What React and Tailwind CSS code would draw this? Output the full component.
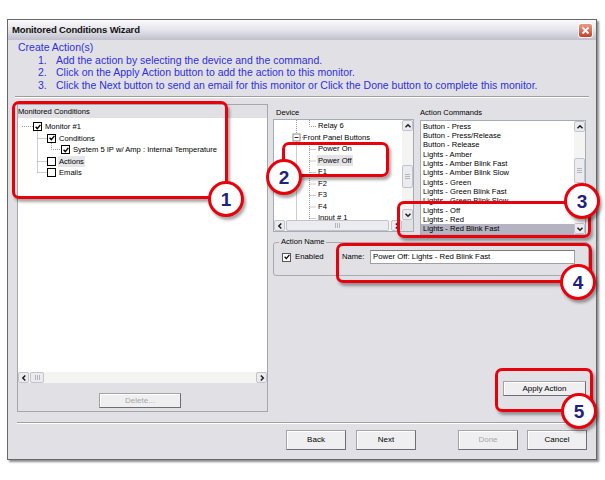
import React from "react";

function Chev({ d }) {
  const p = {
    up: "M1.5 5.3 L4 2.8 L6.5 5.3",
    down: "M1.5 2.8 L4 5.3 L6.5 2.8",
    left: "M5.3 1.5 L2.8 4 L5.3 6.5",
    right: "M2.8 1.5 L5.3 4 L2.8 6.5",
  }[d];
  return (
    <svg width="8" height="8" viewBox="0 0 8 8">
      <path d={p} fill="none" stroke="#1e1e1e" strokeWidth="1.5" />
    </svg>
  );
}

function SBtn({ d }) {
  return (
    <div className="w-[11px] h-[11px] shrink-0 flex items-center justify-center bg-[#ececf0] border border-[#c3c3cc] rounded-[2px]">
      <Chev d={d} />
    </div>
  );
}

function GripV() {
  return (
    <svg width="5" height="5" viewBox="0 0 5 5">
      <path d="M0 0.5H5M0 2.5H5M0 4.5H5" stroke="#b5b5c0" strokeWidth="1" />
    </svg>
  );
}

function GripH() {
  return (
    <svg width="5" height="5" viewBox="0 0 5 5">
      <path d="M0.5 0V5M2.5 0V5M4.5 0V5" stroke="#b5b5c0" strokeWidth="1" />
    </svg>
  );
}

function TreeCheck({ checked }) {
  return (
    <div className="w-[9px] h-[9px] shrink-0 border-[1.5px] border-black bg-white flex items-center justify-center">
      {checked && (
        <svg width="6" height="6" viewBox="0 0 6 6">
          <path d="M0.6 2.8 L2.3 4.6 L5.4 0.9" fill="none" stroke="#000" strokeWidth="1.4" />
        </svg>
      )}
    </div>
  );
}

function Btn({ children, className, disabled }) {
  return (
    <div
      className={
        "flex items-center justify-center bg-[#efeff1] border border-[#a4a4a8] border-r-[#6e6e72] border-b-[#6e6e72] shadow-[inset_1px_1px_0_#ffffff] text-[8px] " +
        (disabled ? "text-[#a6a6a8] " : "text-black ") +
        className
      }
    >
      {children}
    </div>
  );
}

function Callout({ className }) {
  return (
    <div
      className={
        "absolute border-[3px] border-[#e8000b] rounded-[7px] shadow-[2px_3px_3px_rgba(0,0,0,0.35)] " + className
      }
    />
  );
}

function Badge({ n, className }) {
  return (
    <div
      className={
        "absolute w-[36px] h-[36px] rounded-full bg-white border-[3px] border-[#e8000b] shadow-[2px_3px_3px_rgba(0,0,0,0.35)] flex items-center justify-center text-[19px] leading-none font-bold text-[#22227a] " +
        className
      }
    >
      {n}
    </div>
  );
}

const devRows = [
  { t: "Relay 6", pl: "pl-[44px]" },
  { t: "Front Panel Buttons", pl: "pl-[29px]" },
  { t: "Power On", pl: "pl-[44px]" },
  { t: "Power Off", pl: "pl-[44px]", sel: true },
  { t: "F1", pl: "pl-[44px]" },
  { t: "F2", pl: "pl-[44px]" },
  { t: "F3", pl: "pl-[44px]" },
  { t: "F4", pl: "pl-[44px]" },
  { t: "Input # 1", pl: "pl-[44px]" },
];

const cmds = [
  "Button - Press",
  "Button - Press/Release",
  "Button - Release",
  "Lights - Amber",
  "Lights - Amber Blink Fast",
  "Lights - Amber Blink Slow",
  "Lights - Green",
  "Lights - Green Blink Fast",
  "Lights - Green Blink Slow",
  "Lights - Off",
  "Lights - Red",
  "Lights - Red Blink Fast",
];

export default function App() {
  return (
    <div className="relative w-[605px] h-[480px] bg-white pt-[19px] pl-[7px] overflow-hidden font-['Liberation_Sans',Arial,sans-serif] text-black">
      <div className="w-[590px] h-[441px] border border-[#66666b] bg-[#e1e0e5] flex flex-col shadow-[2px_2px_2px_rgba(0,0,0,0.45)]">
        {/* Title bar */}
        <div className="h-[20px] shrink-0 flex items-center justify-between bg-linear-to-b from-[#fbfbfd] via-[#e4e4ea] to-[#bfc0cc] pl-[4px] pr-[3px]">
          <span className="text-[9.5px] font-bold tracking-[-0.15px] text-[#111]">Monitored Conditions Wizard</span>
          <div className="w-[15px] h-[15px] rounded-[3px] border border-white bg-linear-to-b from-[#eb9a84] to-[#c63e28] flex items-center justify-center">
            <svg width="9" height="9" viewBox="0 0 9 9">
              <path d="M1.5 1.5 L7.5 7.5 M7.5 1.5 L1.5 7.5" stroke="#fff" strokeWidth="1.8" />
            </svg>
          </div>
        </div>

        {/* Instructions */}
        <div className="h-[56px] shrink-0 pl-[10px] pt-[1px] text-[10.5px] leading-[12.5px] text-[#2f2fe0]">
          <div>Create Action(s)</div>
          <div className="flex">
            <span className="ml-[20px] w-[18px]">1.</span>
            <span>Add the action by selecting the device and the command.</span>
          </div>
          <div className="flex">
            <span className="ml-[20px] w-[18px]">2.</span>
            <span>Click on the Apply Action button to add the action to this monitor.</span>
          </div>
          <div className="flex">
            <span className="ml-[20px] w-[18px]">3.</span>
            <span className="whitespace-nowrap">Click the Next button to send an email for this monitor or Click the Done button to complete this monitor.</span>
          </div>
        </div>

        <div className="h-[2px] shrink-0 mx-[7px] border-t border-t-[#9d9da2] border-b border-b-white" />

        {/* Panels */}
        <div className="h-[308px] shrink-0 mt-[6px] flex pl-[9px]">
          {/* Left panel */}
          <div className="w-[251px] h-[308px] border border-[#a7a6ab] flex flex-col">
            <div className="h-[13px] shrink-0 text-[7.6px] leading-[13px]">Monitored Conditions</div>
            <div className="h-[254px] shrink-0 bg-white relative text-[7.6px]">
              <svg className="absolute left-0 top-0" width="60" height="60" viewBox="0 0 60 60">
                <g stroke="#9c9c9c" strokeWidth="1" strokeDasharray="1 1" fill="none">
                  <path d="M4 8.5 H15" />
                  <path d="M19.5 13.5 V54.5" />
                  <path d="M19.5 20.5 H29 M19.5 43.5 H29 M19.5 54.5 H29" />
                  <path d="M33.5 25 V31.5 H43" />
                </g>
              </svg>
              <div className="relative pt-[3px]">
                <div className="h-[11.5px] flex items-center pl-[15px]">
                  <TreeCheck checked />
                  <span className="ml-[3px]">Monitor #1</span>
                </div>
                <div className="h-[11.5px] flex items-center pl-[29px]">
                  <TreeCheck checked />
                  <span className="ml-[3px]">Conditions</span>
                </div>
                <div className="h-[11.5px] flex items-center pl-[43px]">
                  <TreeCheck checked />
                  <span className="ml-[3px] whitespace-nowrap">System 5 IP w/ Amp : Internal Temperature</span>
                </div>
                <div className="h-[11.5px] flex items-center pl-[29px]">
                  <TreeCheck />
                  <span className="ml-[2px] px-[1px] bg-[#e6e6e8]">Actions</span>
                </div>
                <div className="h-[11.5px] flex items-center pl-[29px]">
                  <TreeCheck />
                  <span className="ml-[3px]">Emails</span>
                </div>
              </div>
            </div>
            <div className="h-[11px] shrink-0 flex bg-[#f4f4f3]">
              <SBtn d="left" />
              <div className="w-[14px] h-[11px] ml-[1px] bg-[#ebebf0] border border-[#c3c3cc] rounded-[2px] flex items-center justify-center">
                <GripH />
              </div>
              <div className="flex-1" />
              <SBtn d="right" />
            </div>
            <div className="h-[28px] shrink-0 pt-[10px] pl-[81px]">
              <Btn disabled className="w-[82px] h-[15px]">Delete...</Btn>
            </div>
          </div>

          {/* Right side */}
          <div className="w-[316px] ml-[5px] flex flex-col">
            <div className="flex">
              {/* Device */}
              <div className="w-[141px] flex flex-col">
                <div className="h-[15px] pt-[4px] pl-[3px] text-[7.6px] leading-[10px]">Device</div>
                <div className="h-[113px] border border-[#a5acb5] bg-white flex flex-col">
                  <div className="flex flex-1 min-h-0">
                    <div className="flex-1 relative overflow-hidden text-[7.6px]">
                      <svg className="absolute left-0 top-0" width="50" height="111" viewBox="0 0 50 111">
                        <g stroke="#9c9c9c" strokeWidth="1" strokeDasharray="1 1" fill="none">
                          <path d="M22.5 0 V13.5" />
                          <path d="M22.5 21.5 V111" />
                          <path d="M35.5 0 V6.5 H42" />
                          <path d="M26 17.5 H29" />
                          <path d="M35.5 22 V111" />
                          <path d="M35.5 29.5 H42 M35.5 41 H42 M35.5 52.5 H42 M35.5 64 H42 M35.5 75.5 H42 M35.5 87 H42 M35.5 98.5 H42" />
                        </g>
                        <rect x="19" y="14" width="7" height="7" fill="#fff" stroke="#8a8a8a" strokeWidth="1" />
                        <path d="M20.5 17.5 H24.5" stroke="#222" strokeWidth="1" />
                      </svg>
                      <div className="relative">
                        {devRows.map((r) => (
                          <div key={r.t} className={"h-[11.5px] flex items-center whitespace-nowrap " + r.pl}>
                            {r.sel ? <span className="-ml-[1px] px-[1px] bg-[#e4e4e6]">{r.t}</span> : <span>{r.t}</span>}
                          </div>
                        ))}
                      </div>
                    </div>
                    <div className="w-[11px] flex flex-col bg-[#f4f4f3]">
                      <SBtn d="up" />
                      <div className="flex-1">
                        <div className="mt-[34px] h-[23px] bg-[#ebebf0] border border-[#c3c3cc] rounded-[2px] flex items-center justify-center">
                          <GripV />
                        </div>
                      </div>
                      <SBtn d="down" />
                    </div>
                  </div>
                  <div className="h-[11px] shrink-0 flex bg-[#f4f4f3]">
                    <SBtn d="left" />
                    <div className="w-[103px] h-[11px] ml-[1px] bg-[#ebebf0] border border-[#c3c3cc] rounded-[2px] flex items-center justify-center">
                      <GripH />
                    </div>
                    <div className="flex-1" />
                    <SBtn d="right" />
                    <div className="w-[11px] bg-[#e1e0e5]" />
                  </div>
                </div>
              </div>

              {/* Action Commands */}
              <div className="w-[166px] ml-[6px] flex flex-col">
                <div className="h-[15px] pt-[4px] text-[7.6px] leading-[10px]">Action Commands</div>
                <div className="mt-[1px] h-[115px] border border-[#a5acb5] bg-white flex">
                  <div className="flex-1 pt-[0.5px] text-[7.6px] leading-[9.35px] overflow-hidden">
                    {cmds.map((c, i) => (
                      <div key={c} className={"pl-[2px] whitespace-nowrap " + (i === cmds.length - 1 ? "bg-[#b3b3c1]" : "")}>
                        {c}
                      </div>
                    ))}
                  </div>
                  <div className="w-[11px] flex flex-col bg-[#f4f4f3]">
                    <SBtn d="up" />
                    <div className="flex-1">
                      <div className="mt-[26px] h-[25px] bg-[#ebebf0] border border-[#c3c3cc] rounded-[2px] flex items-center justify-center">
                        <GripV />
                      </div>
                    </div>
                    <SBtn d="down" />
                  </div>
                </div>
              </div>
            </div>

            {/* Action Name group */}
            <fieldset className="mt-[2px] h-[39px] border border-[#aaaaae] rounded-[3px]">
              <legend className="ml-[5px] px-[2px] text-[7.6px] leading-[10px]">Action Name</legend>
              <div className="h-[16px] mt-[2px] flex items-center">
                <div className="w-[60px] ml-[8px] flex items-center">
                  <div className="w-[9px] h-[9px] border border-[#55555a] bg-white flex items-center justify-center">
                    <svg width="6" height="6" viewBox="0 0 6 6">
                      <path d="M0.6 2.8 L2.3 4.6 L5.4 0.9" fill="none" stroke="#000" strokeWidth="1.3" />
                    </svg>
                  </div>
                  <span className="ml-[4px] text-[7.8px]">Enabled</span>
                </div>
                <span className="w-[28px] text-[7.6px]">Name:</span>
                <div className="w-[205px] h-[14px] bg-white border border-[#a0a0a4] border-t-[#7c7c80] pl-[2px] flex items-center text-[7.8px] whitespace-nowrap">
                  Power Off: Lights - Red Blink Fast
                </div>
              </div>
            </fieldset>

            <div className="mt-[105px] flex justify-end pr-[3px]">
              <Btn className="w-[83px] h-[15px]">Apply Action</Btn>
            </div>
          </div>
        </div>

        <div className="h-[2px] shrink-0 mt-[10px] ml-[9px] mr-[6px] border-t border-t-[#9d9da2] border-b border-b-white" />

        {/* Bottom buttons */}
        <div className="h-[20px] shrink-0 mt-[6px] flex">
          <Btn className="ml-[278px] w-[60px] h-[20px]">Back</Btn>
          <Btn className="ml-[10px] w-[60px] h-[20px]">Next</Btn>
          <Btn disabled className="ml-[42px] w-[60px] h-[20px]">Done</Btn>
          <Btn className="ml-[9px] w-[60px] h-[20px]">Cancel</Btn>
        </div>
      </div>

      {/* Annotations */}
      <Callout className="left-[12px] top-[101px] w-[216px] h-[98px]" />
      <Callout className="left-[282px] top-[142px] w-[107px] h-[35px]" />
      <Callout className="left-[397px] top-[201px] w-[194px] h-[37px]" />
      <Callout className="left-[336px] top-[243px] w-[256px] h-[40px]" />
      <Callout className="left-[495px] top-[368px] w-[98px] h-[44px]" />
      <Badge n="1" className="left-[208px] top-[181px]" />
      <Badge n="2" className="left-[266px] top-[159px]" />
      <Badge n="3" className="left-[564px] top-[183px]" />
      <Badge n="4" className="left-[560px] top-[264px]" />
      <Badge n="5" className="left-[561px] top-[393px]" />
    </div>
  );
}
